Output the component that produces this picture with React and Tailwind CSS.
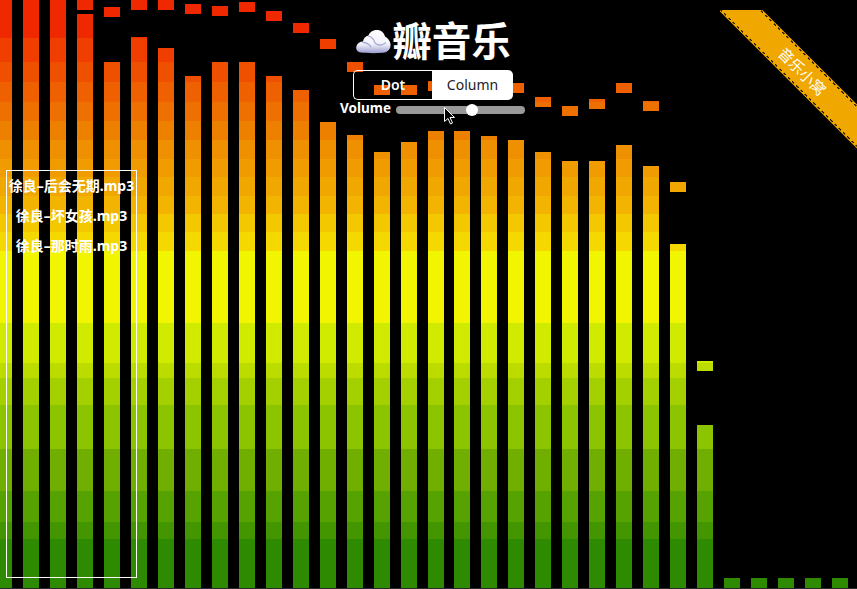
const GRADIENT =
  "bg-fixed bg-[linear-gradient(to_bottom,#f02800_38px,#ef3e00_38px,#ef3e00_62px,#ee5000_62px,#ee5000_82px,#ee6000_82px,#ee6000_102px,#ee7000_102px,#ee7000_121px,#ee8000_121px,#ee8000_140px,#ef9000_140px,#ef9000_159px,#f09c00_159px,#f09c00_177px,#f0a800_177px,#f0a800_196px,#f2b400_196px,#f2b400_214px,#f4c800_214px,#f4c800_232px,#f5d800_232px,#f5d800_251px,#f1f500_251px,#f1f500_323px,#d0ea00_323px,#d0ea00_363px,#bcdc00_363px,#bcdc00_378px,#a4d000_378px,#a4d000_405px,#8cc400_405px,#8cc400_449px,#70ae00_449px,#70ae00_491px,#56a200_491px,#56a200_522px,#449600_522px,#449600_539px,#2e8a00_539px)]";

// [cap top, bar top], null = not shown
const bars = [
  [null, 0], [null, 0], [null, 0], [0, 14], [7, 62], [0, 37], [0, 48], [4, 76],
  [6, 62], [2, 62], [11, 76], [23, 90], [39, 122], [62, 135], [85, 152], [85, 142],
  [81, 131], [82, 131], [82, 136], [83, 140], [97, 152], [106, 161], [99, 161], [83, 145],
  [101, 166], [182, 244], [361, 425], [578, null], [578, null], [578, null], [578, null], [578, null],
];

const songs = ["徐良–后会无期.mp3", "徐良–坏女孩.mp3", "徐良–那时雨.mp3"];

function Cloud() {
  return (
    <svg width="37" height="26" viewBox="0 0 37 26" className="shrink-0">
      <defs>
        <linearGradient id="cloud" x1="0" y1="0" x2="0" y2="1">
          <stop offset="0" stopColor="#ffffff" />
          <stop offset="0.6" stopColor="#f2f2fa" />
          <stop offset="1" stopColor="#9c9cd0" />
        </linearGradient>
        <filter id="soft">
          <feGaussianBlur stdDeviation="0.5" />
        </filter>
      </defs>
      <g filter="url(#soft)">
        <path
          d="M6 24.500C2 24 0.500 21 1.500 18 2.500 15 5 13.500 8 13.500 8.500 10.500 10.500 8 13.500 7.500 15 3.500 18.500 2 22 2 26 2 29 4.500 30 8.500 33.500 10.500 36 14 35.500 18 35 22 32 24.500 28 24.800 21 25.300 12 25.300 6 24.500Z"
          fill="url(#cloud)"
        />
        <path d="M13.500 8C17 9 19 11.500 20 15M20 15C23 17.500 27 17.500 30.500 15M8 14.500C11 14.500 14 16 16 19" fill="none" stroke="#a8a8d6" strokeWidth="1.3" strokeLinecap="round" />
      </g>
    </svg>
  );
}

function Cursor() {
  return (
    <svg width="12" height="18" viewBox="0 0 12 18" className="absolute left-[444px] top-[107px]">
      <path d="M0.500 0.500V14.500L4 11.500 6.500 17 8.500 16 6 10.500H10.500Z" fill="#000" stroke="#fff" strokeWidth="1" />
    </svg>
  );
}

export default function App() {
  return (
    <div className="relative h-[589px] w-[857px] overflow-hidden border-b border-[#2a2a2a] bg-black font-['Noto_Sans','Noto_Sans_CJK_SC',sans-serif] text-white">
      {/* spectrum */}
      <div className="-ml-1 flex h-[588px] gap-[10.97px]">
        {bars.map(([cap, top], i) => (
          <div key={i} className="flex w-4 shrink-0 flex-col">
            {cap !== null && <div className={`h-2.5 shrink-0 ${GRADIENT}`} style={{ marginTop: cap }} />}
            {top !== null && <div className={`mt-auto ${GRADIENT}`} style={{ height: 588 - top }} />}
          </div>
        ))}
      </div>

      {/* playlist */}
      <ul className="absolute left-1.5 top-[170px] h-[408px] w-[131px] border border-white text-center text-sm font-bold">
        {songs.map((song) => (
          <li key={song} className="h-[30px] whitespace-nowrap leading-[30px]">{song}</li>
        ))}
      </ul>

      {/* header controls */}
      <div className="absolute left-[340px] top-[18px] flex w-[186px] flex-col items-center">
        <div className="flex h-[46px] items-center">
          <Cloud />
          <h1 className="text-[39.5px] font-bold leading-[46px]">瓣音乐</h1>
        </div>
        <div className="mt-1.5 flex h-[30px] w-40 text-sm">
          <button className="w-[79px] rounded-l-[5px] border border-r-0 border-white font-semibold">Dot</button>
          <button className="flex-1 rounded-r-[5px] bg-white text-[#222]">Column</button>
        </div>
        <div className="flex h-5 w-[185px] items-center justify-between self-start">
          <span className="-mt-1 text-[13.5px] font-bold leading-5">Volume</span>
          <div className="flex h-2 w-[129px] items-center rounded-full bg-[#999]">
            <div className="ml-[70px] size-3 rounded-full bg-white" />
          </div>
        </div>
      </div>
      <Cursor />

      {/* corner ribbon */}
      <div className="absolute right-0 top-2.5 h-[141px] w-[137px] overflow-hidden">
        <div className="absolute left-[-38px] top-[46px] flex h-[31px] w-[240px] rotate-45 flex-col items-center justify-between bg-[#f0a800] py-[1px] text-[15px] leading-[27px]">
          <div className="h-[1.5px] w-full bg-[repeating-linear-gradient(90deg,#000_0_3px,transparent_3px_6px)]" />
          <span>音乐小窝</span>
          <div className="h-[1.5px] w-full bg-[repeating-linear-gradient(90deg,#000_0_3px,transparent_3px_6px)]" />
        </div>
      </div>
    </div>
  );
}
